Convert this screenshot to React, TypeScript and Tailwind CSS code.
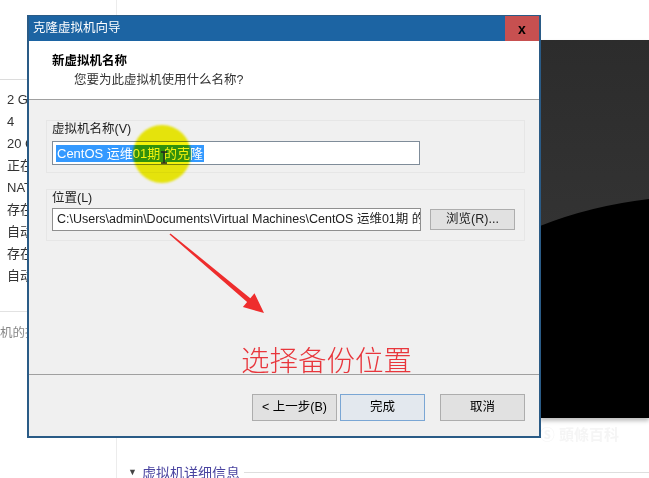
import React from 'react';

const leftRows = ['2 GB', '4', '20 GB', '正在使用', 'NAT', '存在', '自动检测', '存在', '自动检测'];

function WinButton({ label, primary }: { label: string; primary?: boolean }) {
  return (
    <button
      className={
        primary
          ? 'h-[27px] w-[85px] border border-[#7aa6d4] bg-[#e3e8ee] text-[12.5px] text-black'
          : 'h-[27px] w-[85px] border border-[#adadad] bg-[#e1e1e1] text-[12.5px] text-black'
      }
    >
      {label}
    </button>
  );
}

function CloneWizard() {
  return (
    <div className="absolute left-[27px] top-[15px] flex h-[423px] w-[514px] flex-col border-x-2 border-b-2 border-t border-[#2a5b86] bg-[#f0f0f0]">
      {/* title bar */}
      <div className="flex h-[25px] shrink-0 items-center bg-[#1c64a3]">
        <span className="flex-1 pl-[4px] text-[12.5px] text-white">克隆虚拟机向导</span>
        <div className="flex h-full w-[34px] items-center justify-center bg-[#c75050] text-[14px] font-bold leading-none text-black">
          x
        </div>
      </div>

      {/* header */}
      <div className="h-[59px] shrink-0 border-b border-[#a0a0a0] bg-white pl-[23px] pt-[13px]">
        <div className="text-[12.5px] font-bold leading-[15px] text-black">新虚拟机名称</div>
        <div className="mt-[4px] pl-[22px] text-[12.5px] leading-[15px] text-[#333]">您要为此虚拟机使用什么名称?</div>
      </div>

      {/* body */}
      <div className="flex-1 pl-[17px] pr-[14px] pt-[20px]">
        <div className="border border-[#e6e6e6] px-[5px] pb-[7px] pt-[1px]">
          <div className="text-[12.5px] leading-[14px] text-[#222]">虚拟机名称(V)</div>
          <div className="mt-[5px] flex h-[24px] w-[368px] items-center border border-[#7f8c99] bg-white px-[3px]">
            <span className="bg-[#3399ff] px-[1px] text-[13px] leading-[17px] text-white">CentOS 运维01期 的克隆</span>
          </div>
        </div>
        <div className="mt-[16px] border border-[#e6e6e6] px-[5px] pb-[9px] pt-[1px]">
          <div className="text-[12.5px] leading-[14px] text-[#222]">位置(L)</div>
          <div className="mt-[3px] flex items-center">
            <div className="flex h-[23px] w-[369px] items-center overflow-hidden whitespace-nowrap border border-[#8f8f8f] bg-white px-[4px] text-[12.5px] text-[#222]">
              C:\Users\admin\Documents\Virtual Machines\CentOS 运维01期 的克隆
            </div>
            <button className="ml-[9px] h-[21px] w-[85px] border border-[#adadad] bg-[#e1e1e1] text-[12.5px] text-[#222]">
              浏览(R)...
            </button>
          </div>
        </div>
      </div>

      {/* footer */}
      <div className="flex h-[62px] shrink-0 items-start justify-end border-t border-[#a0a0a0] pr-[14px] pt-[19px]">
        <WinButton label="< 上一步(B)" />
        <div className="ml-[3px]">
          <WinButton label="完成" primary />
        </div>
        <div className="ml-[15px]">
          <WinButton label="取消" />
        </div>
      </div>
    </div>
  );
}

export default function App() {
  return (
    <div className="relative h-[478px] w-[649px] overflow-hidden bg-white font-['Liberation_Sans','Noto_Sans_CJK_SC',sans-serif]">
      <div className="flex h-full">
        {/* left info column */}
        <div className="w-[117px] shrink-0 border-r border-[#ececec]">
          <div className="h-[80px] border-b border-[#dcdcdc]" />
          <div className="pl-[7px] pt-[11px]">
            {leftRows.map((r, i) => (
              <div key={i} className="h-[22px] whitespace-nowrap text-[13px] leading-[18px] text-[#333]">
                {r}
              </div>
            ))}
          </div>
          <div className="mt-[22px] border-t border-[#e2e2e2] pt-[12px]">
            <div className="whitespace-nowrap text-[12.5px] text-[#888]">机的指南</div>
          </div>
        </div>

        {/* right area */}
        <div className="flex flex-1 flex-col">
          <div className="mt-[40px] flex justify-end">
            <div className="relative h-[378px] w-[109px] bg-gradient-to-b from-[#2c2c2c] to-[#3a3a3a] shadow-[0_3px_4px_rgba(0,0,0,0.25)]">
              <svg className="absolute inset-0" width="109" height="378" viewBox="0 0 109 378">
                <path d="M0 186 Q50 166 109 159 L109 378 L0 378 Z" fill="#000" />
              </svg>
            </div>
          </div>
          <div className="mt-[6px] flex justify-end pr-[30px]">
            <span className="text-[15px] font-bold text-[#f5f5f5]">Ⓢ 頭條百科</span>
          </div>
          <div className="mt-[17px] flex items-center pl-[11px]">
            <span className="text-[9px] text-[#444]">▼</span>
            <span className="ml-[5px] text-[14px] leading-[18px] text-[#4a44a0]">虚拟机详细信息</span>
            <div className="ml-[4px] h-px flex-1 bg-[#dedede]" />
          </div>
        </div>
      </div>

      <CloneWizard />

      {/* annotations drawn on top of the screen recording */}
      <div className="pointer-events-none absolute left-[133px] top-[125px] h-[58px] w-[58px] rounded-full bg-[#f4f20c] mix-blend-multiply blur-[1px]" />
      <svg className="pointer-events-none absolute left-[160px] top-[151px]" width="8" height="13" viewBox="0 0 8 13">
        <path d="M1 1h6M4 1v11M1 12h6" stroke="#222" strokeWidth="1.3" fill="none" />
      </svg>

      <svg className="pointer-events-none absolute left-[165px] top-[228px]" width="110" height="95" viewBox="0 0 110 95">
        <path d="M5.5 5.4 L85.3 70.2 L89.5 65.2 L99 85 L77.9 79 L82.1 74 L4.5 6.6 Z" fill="#ee2d2d" />
      </svg>

      <div className="pointer-events-none absolute left-[241px] top-[345px] whitespace-nowrap font-['Noto_Sans_CJK_SC',sans-serif] text-[28.5px] font-light leading-none text-[#e8363c]">
        选择备份位置
      </div>
    </div>
  );
}
